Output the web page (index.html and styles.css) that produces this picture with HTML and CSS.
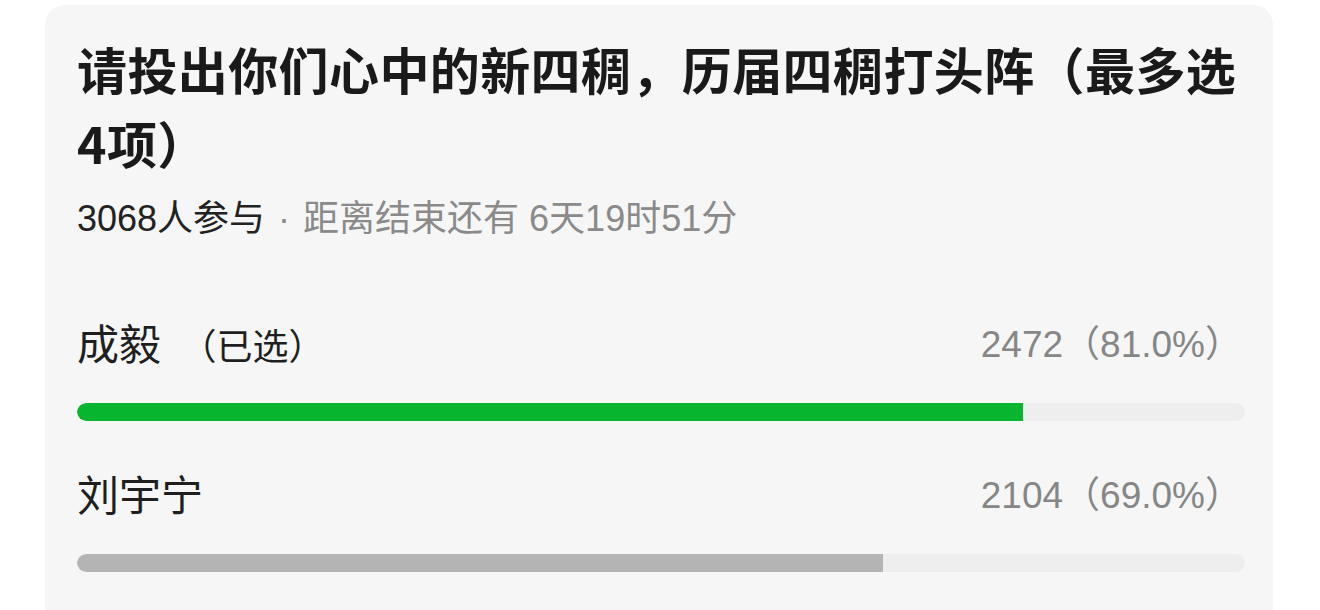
FILE: index.html
```html
<!DOCTYPE html>
<html lang="zh-CN">
<head>
  <meta charset="UTF-8">
  <meta name="viewport" content="width=device-width, initial-scale=1.0">
  <title>投票</title>
  <link rel="stylesheet" href="styles.css">
</head>
<body>

  <div class="card">
    <h1 class="title">请投出你们心中的新四稠，历届四稠打头阵（最多选4项）</h1>
    <p class="meta"><span class="meta-count">3068人参与</span><span class="dot">·</span>距离结束还有 6天19时51分</p>

    <ul class="options">
      <li class="option">
        <div class="option-head">
          <span class="option-name">成毅 <span class="picked">（已选）</span></span>
          <span class="option-count">2472（81.0%）</span>
        </div>
        <div class="bar-track">
          <div class="bar-fill selected" style="width: 81%"></div>
        </div>
      </li>
      <li class="option">
        <div class="option-head">
          <span class="option-name">刘宇宁</span>
          <span class="option-count">2104（69.0%）</span>
        </div>
        <div class="bar-track">
          <div class="bar-fill" style="width: 69%"></div>
        </div>
      </li>
    </ul>
  </div>

</body>
</html>
```

FILE: styles.css
```css
body {
  font-family: "Noto Sans CJK SC", "Noto Sans", sans-serif;
  margin: 0;
  padding: 0;
  background-color: #ffffff;
  color: #1f1f1f;
  overflow: hidden;
}

.card {
  margin: 5px 0 0 45px;
  width: 1228px;
  min-height: 640px;
  box-sizing: border-box;
  padding: 26px 28px 0 32px;
  background-color: #f6f6f6;
  border-radius: 20px;
}

.title {
  margin: 0;
  font-size: 50px;
  font-weight: bold;
  line-height: 74px;
  letter-spacing: 0.4px;
  color: #1a1a1a;
}

.meta {
  margin: 18px 0 0;
  font-family: "Liberation Sans", "Noto Sans CJK SC", sans-serif;
  font-size: 36px;
  line-height: 44px;
  color: #8a8a8a;
}

.meta-count {
  color: #222;
}

.dot {
  margin: 0 13px;
}

.options {
  list-style: none;
  margin: 79px 0 0;
  padding: 0;
}

.option + .option {
  margin-top: 50px;
}

.option-head {
  display: flex;
  justify-content: space-between;
  align-items: center;
  height: 42px;
  padding: 0 3px 8px 0;
}

.option-name {
  font-size: 42px;
  color: #1f1f1f;
}

.picked {
  font-size: 36px;
  margin-left: 10px;
}

.option-count {
  font-family: "Liberation Sans", "Noto Sans CJK SC", sans-serif;
  font-size: 37px;
  color: #868686;
}

/* 진행 막대 */
.bar-track {
  margin-top: 33px;
  height: 18px;
  background-color: #eeeeee;
  border-radius: 9px;
  overflow: hidden;
}

.bar-fill {
  height: 100%;
  background-color: #b4b4b4;
  border-radius: 9px 0 0 9px;
}

.bar-fill.selected {
  background-color: #08b52f;
}
```
